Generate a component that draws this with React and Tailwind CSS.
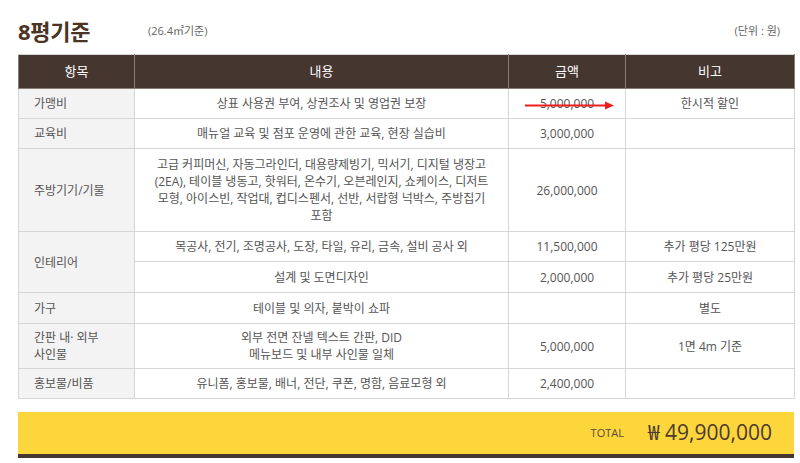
const rows = [
  { item: '가맹비', content: '상표 사용권 부여, 상권조사 및 영업권 보장', price: '5,000,000', strike: true, note: '한시적 할인', h: 'h-[30px]' },
  { item: '교육비', content: '매뉴얼 교육 및 점포 운영에 관한 교육, 현장 실습비', price: '3,000,000', note: '', h: 'h-[30px]' },
  {
    item: '주방기기/기물',
    content: '고급 커피머신, 자동그라인더, 대용량제빙기, 믹서기, 디지털 냉장고 (2EA), 테이블 냉동고, 핫워터, 온수기, 오븐레인지, 쇼케이스, 디저트 모형, 아이스빈, 작업대, 컵디스펜서, 선반, 서랍형 넉박스, 주방집기 포함',
    price: '26,000,000',
    note: '',
    h: 'h-[83px]',
  },
];

const tail = [
  { item: '가구', content: '테이블 및 의자, 붙박이 쇼파', price: '', note: '별도', h: 'h-[31px]' },
  { item: '간판 내· 외부\n사인물', content: '외부 전면 잔넬 텍스트 간판, DID\n메뉴보드 및 내부 사인물 일체', price: '5,000,000', note: '1면 4m 기준', h: 'h-[45px]' },
  { item: '홍보물/비품', content: '유니폼, 홍보물, 배너, 전단, 쿠폰, 명함, 음료모형 외', price: '2,400,000', note: '', h: 'h-[30px]' },
];

const td = 'border border-[#d6d6d6] text-center text-[12px] leading-[17px] text-[#555]';
const th = 'border border-[#8a7d74] border-t-[#d6d6d6] text-[13px] font-normal text-white';
const first = 'border border-[#d6d6d6] bg-[#f3f3f3] pl-[15px] text-left text-[12px] leading-[17px] text-[#555] whitespace-pre-line';

function Price({ value, strike }) {
  if (!strike) return value;
  return (
    <span className="relative inline-block">
      {value}
      <svg className="absolute left-[-15px] top-[6px]" width="90" height="9" viewBox="0 0 90 9">
        <line x1="0" y1="4.5" x2="82" y2="4.5" stroke="#f01c1c" strokeWidth="2" />
        <path d="M80 0.5 L89 4.5 L80 8.5 Z" fill="#f01c1c" />
      </svg>
    </span>
  );
}

function Row({ r }) {
  return (
    <tr className={r.h}>
      <td className={first}>{r.item}</td>
      <td className={`${td} whitespace-pre-line break-keep px-[16px]`}>{r.content}</td>
      <td className={td}>
        <Price value={r.price} strike={r.strike} />
      </td>
      <td className={td}>{r.note}</td>
    </tr>
  );
}

export default function App() {
  return (
    <div className="h-[463px] w-[800px] bg-white px-[18px] pt-[14px] font-['Open_Sans','Noto_Sans_CJK_KR',sans-serif] text-[#555]">
      <div className="flex h-[38px] items-center pr-[2px] pb-[4px]">
        <h2 className="w-[130px] text-[22px] font-bold tracking-[-0.3px] text-[#4b3423]">8평기준</h2>
        <span className="text-[11px] text-[#666]">(26.4㎡기준)</span>
        <span className="ml-auto text-[11px] text-[#666]">(단위 : 원)</span>
      </div>

      <table className="mt-[2px] w-[776px] table-fixed border-collapse">
        <colgroup>
          <col className="w-[116px]" />
          <col className="w-[374px]" />
          <col className="w-[117px]" />
          <col className="w-[169px]" />
        </colgroup>
        <thead>
          <tr className="h-[34px] bg-[#463630]">
            <th className={th}>항목</th>
            <th className={th}>내용</th>
            <th className={th}>금액</th>
            <th className={th}>비고</th>
          </tr>
        </thead>
        <tbody>
          {rows.map((r) => (
            <Row key={r.item} r={r} />
          ))}
          <tr className="h-[30px]">
            <td rowSpan={2} className={first}>인테리어</td>
            <td className={td}>목공사, 전기, 조명공사, 도장, 타일, 유리, 금속, 설비 공사 외</td>
            <td className={td}>11,500,000</td>
            <td className={td}>추가 평당 125만원</td>
          </tr>
          <tr className="h-[31px]">
            <td className={td}>설계 및 도면디자인</td>
            <td className={td}>2,000,000</td>
            <td className={td}>추가 평당 25만원</td>
          </tr>
          {tail.map((r) => (
            <Row key={r.item} r={r} />
          ))}
        </tbody>
      </table>

      <div className="mt-[13px] flex h-[46px] w-[776px] items-center justify-end border-b-[4px] border-[#463630] bg-[#fdd63c] pr-[22px]">
        <span className="mr-[24px] text-[11px] text-[#5a4a3c]">TOTAL</span>
        <span className="text-[21px] text-[#4b3a2f]">₩ 49,900,000</span>
      </div>
    </div>
  );
}
